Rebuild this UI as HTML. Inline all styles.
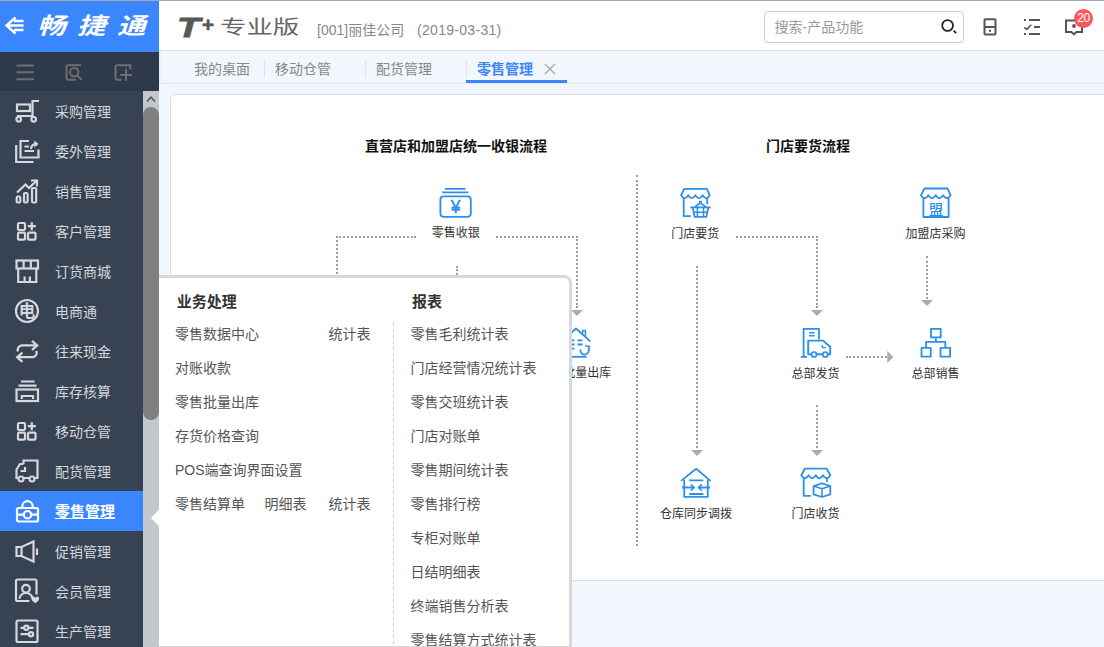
<!DOCTYPE html>
<html lang="zh-CN">
<head>
<meta charset="utf-8">
<title>T+ 专业版</title>
<style>
*{box-sizing:border-box;margin:0;padding:0}
html,body{width:1104px;height:647px;overflow:hidden;background:#f2f6fd;font-family:"Liberation Sans","Noto Sans CJK SC",sans-serif;font-size:14px;color:#555}
body{position:relative}
.abs{position:absolute}
/* top line */
#topline{left:0;top:0;width:1104px;height:1px;background:#a9a9a9;z-index:50}
/* logo */
#logo{left:0;top:0;width:159px;height:52px;background:#3a86ff;color:#fff}
#logo .back{position:absolute;left:0;top:12px}
#logo .name{position:absolute;left:37px;top:5px;font-size:23px;font-weight:700;font-style:italic;letter-spacing:9.3px;white-space:nowrap;line-height:42px;transform-origin:0 50%;transform:scaleX(1.24)}
/* header */
#header{left:159px;top:0;width:945px;height:51px;background:#fff;border-bottom:1px solid #dedfe2}
#header .tplus{position:absolute;left:17.5px;top:9.5px;font-size:27px;line-height:36px;font-weight:700;font-style:italic;color:#585858;font-family:"Liberation Sans",sans-serif;transform-origin:0 50%;transform:scaleX(1.4);-webkit-text-stroke:0.8px #585858}
#header .plus{position:absolute;left:42.5px;top:7px;font-size:21px;line-height:36px;font-weight:700;font-style:italic;color:#585858;font-family:"Liberation Sans",sans-serif;-webkit-text-stroke:0.5px #585858}
#header .ver{position:absolute;left:60.8px;top:9.5px;font-size:19px;line-height:36px;color:#666;white-space:nowrap;transform-origin:0 50%;transform:scaleX(1.39)}
#header .corp{position:absolute;left:158px;top:20px;font-size:14px;line-height:20px;color:#888;white-space:nowrap}
#header .date{position:absolute;left:258px;top:20px;font-size:14px;line-height:20px;color:#888;white-space:nowrap;letter-spacing:0.3px}
#search{left:764px;top:11px;width:200px;height:32px;border:1px solid #ccc;border-radius:4px;background:#fff}
#search span{position:absolute;left:9.6px;top:5px;font-size:14px;line-height:20px;color:#999}
#search svg{position:absolute;left:175px;top:6px}
/* icon bar */
#iconbar{left:0;top:52px;width:159px;height:39px;background:#2e394b}
/* sidebar */
#side{left:0;top:91px;width:143px;height:556px;background:#374252;overflow:hidden}
.mi{position:absolute;left:0;width:143px;height:40px;color:#d5d8dc;font-size:14px;line-height:40px}
.mi span{position:absolute;left:55px;top:1px;white-space:nowrap}
.mi svg{position:absolute;left:15px;top:8px;width:26px;height:26px;fill:none;stroke:currentColor;stroke-width:2.2;overflow:visible}
.mi.on{background:#3a86ff;color:#fff;font-weight:700;font-size:15px}
.mi.on span{text-decoration:underline}
#sbar{left:143px;top:91px;width:16px;height:556px;background:#c4c7cb}
#sbar .thumb{position:absolute;left:0;top:16px;width:16px;height:313px;border-radius:8px;background:#808080}
/* tabs */
#tabs{left:159px;top:51px;width:945px;height:33px;background:#f2f6fd;border-bottom:1px solid #e3e9f3;box-shadow:inset 3px 0 3px -2px rgba(0,0,0,.08)}
.tab{position:absolute;top:2px;height:32px;line-height:33px;font-size:14px;color:#888;white-space:nowrap}
.tab.on{color:#3a86ff;font-weight:700}
.tsep{position:absolute;top:9px;width:1px;height:18px;background:#dfe4ec}
#tabline{left:466px;top:80px;width:101px;height:3px;background:#3a86ff}
/* main panel */
#panel{left:170px;top:94px;width:940px;height:487px;background:#fff;border:1px solid #dadde1;border-radius:5px}
.ft{position:absolute;font-size:14px;font-weight:700;color:#111;white-space:nowrap;line-height:20px}
.fl{position:absolute;font-size:12px;color:#333;white-space:nowrap;line-height:16px;text-align:center}
/* popup */
#pop{left:159px;top:275px;width:413px;height:374px;background:#fff;border-top:3px solid #d8d8d8;border-right:3px solid #d8d8d8;border-bottom:3px solid #d8d8d8;border-top-right-radius:8px;z-index:20;overflow:hidden}
#pop .h{position:absolute;font-size:15px;font-weight:700;color:#333;line-height:20px;white-space:nowrap}
#pop .it{position:absolute;font-size:14px;color:#555;line-height:20px;white-space:nowrap}
#pop .vsep{position:absolute;left:234px;top:45px;width:1px;height:340px;background:repeating-linear-gradient(to bottom,#cdcdcd 0,#cdcdcd 3px,transparent 3px,transparent 6px)}
</style>
</head>
<body>
<div id="topline" class="abs"></div>

<!-- LOGO -->
<div id="logo" class="abs">
  <svg class="back" width="26" height="26" viewBox="0 0 26 26" fill="none" stroke="#fff" stroke-width="2.4"><path d="M15.5 5.5 L6.5 13.5 L15.5 21.5 M7 13.5 H23.5 M14 9 H23.5 M14 18 H23.5"/></svg>
  <div class="name">畅捷通</div>
</div>

<!-- HEADER -->
<div id="header" class="abs">
  <div class="tplus">T</div><div class="plus">+</div>
  <div class="ver">专业版</div>
  <div class="corp">[001]丽佳公司</div>
  <div class="date">(2019-03-31)</div>
</div>
<div id="search" class="abs"><span>搜索-产品功能</span>
  <svg width="18" height="18" viewBox="0 0 18 18" fill="none" stroke="#222" stroke-width="1.8"><circle cx="7.6" cy="7.5" r="5.4"/><path d="M13.6 12.6 L16.2 15.2"/></svg>
</div>
<!--HDRICONS-->
<svg class="abs" style="left:980px;top:15px" width="24" height="24" viewBox="0 0 24 24" fill="none" stroke="#555" stroke-width="2"><rect x="4.5" y="4.3" width="11" height="15.2" rx="0.8"/><path d="M4.5 12 H15.5"/><rect x="9" y="14.8" width="2" height="2" fill="#555" stroke="none"/></svg>
<svg class="abs" style="left:1020px;top:15px" width="24" height="24" viewBox="0 0 24 24" fill="none" stroke="#555" stroke-width="1.8"><path d="M9 5 H20 M14 12 H20 M9 19 H20"/><path d="M4 5 H6 M4 19 H6"/><path d="M4.3 12.3 L6.8 14.3 L11.2 9.8" stroke-width="1.6"/></svg>
<svg class="abs" style="left:1062px;top:15px" width="24" height="24" viewBox="0 0 24 24" fill="none" stroke="#555" stroke-width="2"><path d="M4 5.5 H20 V17 H14.5 L12 19.3 L9.5 17 H4 Z"/><circle cx="12" cy="11" r="1.9" fill="#555" stroke="none"/></svg>
<div class="abs" style="left:1074px;top:8.5px;width:19px;height:19px;border-radius:50%;background:#f9585f;color:#fff;font-size:12px;line-height:19px;text-align:center;letter-spacing:-0.5px">20</div>
<!--/HDRICONS-->

<!-- ICON BAR -->
<div id="iconbar" class="abs">
<!--BARICONS-->
<svg class="abs" style="left:0;top:0" width="159" height="39" viewBox="0 0 159 39" fill="none" stroke="#6e6e6e" stroke-width="2">
<path d="M16.5 13.5 H34 M16.5 20.3 H34 M16.5 27.2 H34"/>
<path d="M81 13.3 H68.2 a1.7 1.7 0 0 0 -1.7 1.7 V26 a1.7 1.7 0 0 0 1.7 1.7 H76"/><circle cx="74.2" cy="20.3" r="4.2"/><path d="M77.4 23.6 L81.7 27.8"/>
<path d="M130.3 17.5 V13.3 H117.2 a1.7 1.7 0 0 0 -1.7 1.7 V26 a1.7 1.7 0 0 0 1.7 1.7 H121.5"/><path d="M126 16.8 V28.8 M120 23 H132"/>
</svg>
<!--/BARICONS-->
</div>

<!-- SIDEBAR -->
<div id="side" class="abs">
<!--MENU-->
<div class="mi" style="top:0px"><svg viewBox="0 0 26 26"><path d="M24 2 H17.5 V17 H2"/><rect x="2" y="5.5" width="13" height="6.5"/><circle cx="3.7" cy="20.3" r="2.3"/><circle cx="18.7" cy="20.3" r="2.3"/></svg><span>采购管理</span></div>
<div class="mi" style="top:40px"><svg viewBox="0 0 26 26"><path d="M1.2 6 V23 H18.5"/><path d="M14 2 H5.5 V18.5 H23.5 V10.5"/><path d="M9.5 7.5 H14 M9.5 12 H19"/><path d="M16 10 C16.3 6.8 18.3 5 21 5" /><path d="M19.3 1.6 L23.6 5 L19.3 8.4 Z" fill="currentColor" stroke="none"/></svg><span>委外管理</span></div>
<div class="mi" style="top:80px"><svg viewBox="0 0 26 26"><rect x="1.7" y="17.5" width="3.6" height="6" rx="1.2"/><rect x="9" y="14" width="3.6" height="9.5" rx="1.2"/><rect x="17" y="9" width="4.2" height="14.5" rx="1.2"/><path d="M2 13.5 L10.5 5.5 L14 9 L21.5 1.7"/><path d="M16 1.5 H22 V7.5"/></svg><span>销售管理</span></div>
<div class="mi" style="top:120px"><svg viewBox="0 0 26 26"><rect x="3" y="4" width="7" height="7" rx="1"/><rect x="3" y="13.7" width="7" height="7" rx="1"/><rect x="13" y="13.7" width="7.5" height="7" rx="1"/><path d="M16.8 3.2 V11.2 M12.8 7.2 H20.8"/></svg><span>客户管理</span></div>
<div class="mi" style="top:160px"><svg viewBox="0 0 26 26"><rect x="1.5" y="1.5" width="21.5" height="8"/><path d="M8.6 1.5 V9.5 M15.8 1.5 V9.5"/><path d="M3.2 9.5 V23 H21.3 V9.5"/><path d="M9.6 23 V17.5 M14.9 23 V17.5"/></svg><span>订货商城</span></div>
<div class="mi" style="top:200px"><svg viewBox="0 0 26 26"><circle cx="12" cy="12" r="11"/><text x="12" y="17.8" font-size="16.5" font-weight="700" text-anchor="middle" fill="currentColor" stroke="none" font-family="Liberation Sans, Noto Sans CJK SC, sans-serif">电</text></svg><span>电商通</span></div>
<div class="mi" style="top:240px"><svg viewBox="0 0 26 26"><path d="M2.7 12.6 V10.8 a4.4 4.4 0 0 1 4.4 -4.4 H21" stroke-width="2.3"/><path d="M17 1.8 L22.2 6.4 L17 11" stroke-width="2.3"/><path d="M21.6 12 V13.8 a4.4 4.4 0 0 1 -4.4 4.4 H3.4" stroke-width="2.3"/><path d="M7.4 13.6 L2.2 18.2 L7.4 22.8" stroke-width="2.3"/></svg><span>往来现金</span></div>
<div class="mi" style="top:280px"><svg viewBox="0 0 26 26"><path d="M6 2.5 H19.5 M3.5 6.7 H21.5"/><rect x="1.5" y="10.5" width="21.5" height="11.5"/><path d="M6.8 20 V17 H18 V20"/></svg><span>库存核算</span></div>
<div class="mi" style="top:320px"><svg viewBox="0 0 26 26"><rect x="3" y="4" width="7" height="7" rx="1"/><rect x="3" y="13.7" width="7" height="7" rx="1"/><rect x="13" y="13.7" width="7.5" height="7" rx="1"/><path d="M16.8 3.2 V11.2 M12.8 7.2 H20.8"/></svg><span>移动仓管</span></div>
<div class="mi" style="top:360px"><svg viewBox="0 0 26 26"><path d="M8.5 5 V1.5 H22.5 V19 H19.7 M14.3 19 H8.7 M3.3 19 H1.5 V10.5 L5 5 H8.5"/><circle cx="6" cy="20" r="2.5"/><circle cx="17" cy="20" r="2.5"/><path d="M5.5 12 H10 V8"/></svg><span>配货管理</span></div>
<div class="mi on" style="top:400px"><svg viewBox="0 0 26 26"><rect x="2" y="9" width="21" height="13.5" rx="1.5"/><path d="M7.3 9 V7.4 a5.2 5.2 0 0 1 10.4 0 V9"/><circle cx="12.5" cy="15.7" r="3.7"/><path d="M2 15.7 H8.8 M16.2 15.7 H23"/></svg><span>零售管理</span></div>
<div class="mi" style="top:440px"><svg viewBox="0 0 26 26"><path d="M1.5 8 H6.5 L18.5 2.5 V22.5 L6.5 17 H1.5 Z"/><path d="M6.5 8 V17"/><path d="M22 9.5 V16"/></svg><span>促销管理</span></div>
<div class="mi" style="top:480px"><svg viewBox="0 0 26 26"><path d="M14.5 22 H2.5 a1.5 1.5 0 0 1 -1.5 -1.5 V2 a1.5 1.5 0 0 1 1.5 -1.5 H20 a1.5 1.5 0 0 1 1.5 1.5 V15.5"/><circle cx="11" cy="9.7" r="3.8"/><path d="M4.5 19.8 a6.5 5.8 0 0 1 13 0"/><path d="M20.3 24.3 C17.8 22.5 16.5 21.3 16.5 19.8 a1.9 1.9 0 0 1 3.8 -0.6 a1.9 1.9 0 0 1 3.8 0.6 C24.1 21.3 22.8 22.5 20.3 24.3 Z" fill="currentColor" stroke="none"/></svg><span>会员管理</span></div>
<div class="mi" style="top:520px"><svg viewBox="0 0 26 26"><rect x="1.5" y="1.5" width="21" height="21.5" rx="1.5"/><path d="M5.5 8.8 H18.5 M5.5 15.2 H18.5"/><circle cx="11.3" cy="8.8" r="2.1" fill="#374252"/><circle cx="16" cy="15.2" r="2.1" fill="#374252"/></svg><span>生产管理</span></div>
<!--/MENU-->
</div>
<div id="sbar" class="abs">
  <svg class="abs" style="left:3px;top:4px" width="10" height="8" viewBox="0 0 10 8" fill="none" stroke="#5a5a5a" stroke-width="1.8"><path d="M1 6.5 L5 2.2 L9 6.5"/></svg>
  <div class="thumb"></div>
</div>

<!-- TABS -->
<div id="tabs" class="abs">
  <div class="tab" style="left:35px">我的桌面</div>
  <div class="tsep" style="left:105px"></div>
  <div class="tab" style="left:116px">移动仓管</div>
  <div class="tsep" style="left:206px"></div>
  <div class="tab" style="left:217px">配货管理</div>
  <div class="tsep" style="left:307px"></div>
  <div class="tab on" style="left:318px">零售管理</div>
  <svg class="abs" style="left:385px;top:12px" width="12" height="12" viewBox="0 0 12 12" stroke="#aaa" stroke-width="1.4"><path d="M1 1 L11 11 M11 1 L1 11"/></svg>
</div>
<div id="tabline" class="abs"></div>

<!-- PANEL -->
<div id="panel" class="abs"></div>
<!--FLOW-->
<div class="abs dl" style="left:336px;top:236px;width:80px;height:190px;border-top:2px dotted #9e9e9e;border-left:2px dotted #9e9e9e;"></div>
<div class="abs dl" style="left:496px;top:236px;width:82px;height:72px;border-top:2px dotted #9e9e9e;border-right:2px dotted #9e9e9e;"></div>
<div class="abs dl" style="left:456px;top:266px;width:2px;height:160px;border-left:2px dotted #9e9e9e;"></div>
<div class="abs dl" style="left:636px;top:175px;width:2px;height:371px;border-left:2px dotted #9e9e9e;"></div>
<div class="abs dl" style="left:736px;top:236px;width:82px;height:72px;border-top:2px dotted #9e9e9e;border-right:2px dotted #9e9e9e;"></div>
<div class="abs dl" style="left:696px;top:266px;width:2px;height:182px;border-left:2px dotted #9e9e9e;"></div>
<div class="abs dl" style="left:926px;top:256px;width:2px;height:43px;border-left:2px dotted #9e9e9e;"></div>
<div class="abs dl" style="left:846px;top:356px;width:41px;height:2px;border-top:2px dotted #9e9e9e;"></div>
<div class="abs dl" style="left:816px;top:405px;width:2px;height:43px;border-left:2px dotted #9e9e9e;"></div>
<svg class="abs" style="left:0;top:0;z-index:5" width="1104" height="647" viewBox="0 0 1104 647" fill="none">
<path d="M571 310 H583 L577 316 Z" fill="#ababab"/>
<path d="M811 310 H823 L817 316 Z" fill="#ababab"/>
<path d="M921 300 H933 L927 306 Z" fill="#ababab"/>
<path d="M691 450 H703 L697 456 Z" fill="#ababab"/>
<path d="M811 450 H823 L817 456 Z" fill="#ababab"/>
<path d="M887.3 351 V363 L893.3 357 Z" fill="#ababab"/>
<g stroke="#2c8fe8" stroke-width="1.8" stroke-linejoin="round">
<path d="M445 188.8 H465.5 M442.3 192.3 H468.2" stroke-width="1.7"/>
<rect x="440.4" y="196.4" width="30.4" height="20.4" rx="3.2"/>
<text x="455.7" y="212.9" font-size="17.5" font-weight="400" stroke-width="0.5" paint-order="stroke" text-anchor="middle" fill="#2c8fe8" stroke="#2c8fe8" font-family="Liberation Sans, sans-serif">¥</text>
<path d="M561.5 341.4 L576 328.5 L590.3 341.4" /><path d="M582.6 334 V330.5 H585.4 V337" stroke-width="1.5"/><path d="M564 356.8 H586.6"/><path d="M577.5 340.3 H582.5 M577.5 344.5 H582.5 M569.5 340.3 H574.5 M569.5 344.5 H574.5 M569.5 348.7 H574.5" stroke-width="1.8"/><path d="M580.5 349.5 a4.2 4.2 0 1 0 7.6 -1.5" stroke-width="1.7"/><path d="M585 346 L589.5 346.3 L588.6 350.8" stroke-width="1.5"/>
<path d="M684.3 188.8 H706.9 L709.7 195.2 Q706.12 201.09 702.55 195.2 Q698.98 201.09 695.40 195.2 Q691.83 201.09 688.25 195.2 Q684.68 201.09 681.10 195.2 Z"/>
<path d="M683.7 198 V216.1 H690.7 M707.2 198 V204.3"/>
<path d="M690.3 207.4 H710.6" stroke-width="1.8"/><path d="M692.6 207.4 L694.6 216.9 H706.3 L708.4 207.4" stroke-width="1.8"/><path d="M697.4 207.4 V216.9 M703.5 207.4 V216.9 M693.6 212.3 H707.3" stroke-width="1.5"/><path d="M695 207 L700.4 202.8 L706 207" stroke-width="1.6"/><circle cx="700.4" cy="202.2" r="1.1" stroke-width="1.3" fill="#fff"/>
<path d="M924.4 188.5 H947.6 L950.6 195.3 Q946.89 201.19 943.17 195.3 Q939.46 201.19 935.75 195.3 Q932.04 201.19 928.33 195.3 Q924.61 201.19 920.90 195.3 Z"/>
<path d="M923.4 198 V217 H948.6 V198"/>
<text x="936" y="214.6" font-size="14.5" font-weight="500" text-anchor="middle" fill="#2c8fe8" stroke="none" font-family="Liberation Sans, Noto Sans CJK SC, sans-serif">盟</text>
<path d="M800.8 356.8 H807 M803.6 356.8 V328.8 H819 V339.5" /><path d="M809 332.7 H814.6 M809 335.7 H814.6" stroke-width="1.5"/>
<path d="M811.3 354.3 H808.2 V340.6 H823 L830.2 346.8 V354.3 H828 M816.8 354.3 H822.5" stroke-width="1.9"/><circle cx="814" cy="354.5" r="2.5" stroke-width="1.7"/><circle cx="825.3" cy="354.5" r="2.5" stroke-width="1.7"/><path d="M822.3 345 V347.6 H826" stroke-width="1.4"/>
<rect x="931" y="328.8" width="9.7" height="8.6"/><rect x="921.5" y="347.8" width="9.2" height="8.9"/><rect x="940.5" y="347.8" width="9.6" height="8.9"/><path d="M935.8 337.4 V341.8 M926 347.8 V341.8 H945.3 V347.8"/>
<path d="M681 480.9 L696.2 468.7 L710.6 480.9"/><path d="M684.2 479.5 V496.8 H707.8 V479.5"/><path d="M689.2 480.3 H703.4 M689.2 494 H703.4" stroke-width="1.8"/><path d="M682 487.5 H694 M710 487.5 H698.5" stroke-width="1.8"/><path d="M690.8 484.3 L694.3 487.5 L690.8 490.7 M701.8 484.3 L698.3 487.5 L701.8 490.7" stroke-width="1.6"/>
<path d="M804.9 468.7 H826.7 L830.3 475.2 Q826.67 481.28 823.05 475.2 Q819.42 481.28 815.80 475.2 Q812.17 481.28 808.55 475.2 Q804.92 481.28 801.30 475.2 Z"/>
<path d="M803.7 478 V495.9 H810.8 M827 478 V482"/>
<path d="M813.6 486 L822 483.3 L830.3 486 V494.3 L822 497 L813.6 494.3 Z" stroke-width="1.8"/><path d="M813.6 486 L822 488.7 L830.3 486 M822 488.7 V497" stroke-width="1.5"/>
</g>
</svg>
<div class="ft" style="left:365px;top:136px">直营店和加盟店统一收银流程</div>
<div class="ft" style="left:766px;top:136px">门店要货流程</div>
<div class="fl" style="left:421.7px;top:225.3px;width:68px">零售收银</div>
<div class="fl" style="left:529.2px;top:365.1px;width:92px">零售批量出库</div>
<div class="fl" style="left:661.3px;top:225.6px;width:68px">门店要货</div>
<div class="fl" style="left:895.6px;top:225.6px;width:80px">加盟店采购</div>
<div class="fl" style="left:781.5px;top:365.6px;width:68px">总部发货</div>
<div class="fl" style="left:901.5px;top:365.6px;width:68px">总部销售</div>
<div class="fl" style="left:650.0px;top:505.6px;width:92px">仓库同步调拨</div>
<div class="fl" style="left:781.5px;top:505.6px;width:68px">门店收货</div>
<!--/FLOW-->

<!-- POPUP -->
<div id="pop" class="abs">
<!--POP-->
<div class="h" style="left:17.7px;top:14.0px">业务处理</div>
<div class="h" style="left:253.0px;top:14.0px">报表</div>
<div class="it" style="left:16.0px;top:46.0px">零售数据中心</div>
<div class="it" style="left:16.0px;top:80.0px">对账收款</div>
<div class="it" style="left:16.0px;top:114.0px">零售批量出库</div>
<div class="it" style="left:16.0px;top:148.0px">存货价格查询</div>
<div class="it" style="left:16.0px;top:182.0px">POS端查询界面设置</div>
<div class="it" style="left:16.0px;top:216.0px">零售结算单</div>
<div class="it" style="left:169.6px;top:46.0px">统计表</div>
<div class="it" style="left:105.6px;top:216.0px">明细表</div>
<div class="it" style="left:169.6px;top:216.0px">统计表</div>
<div class="it" style="left:251.4px;top:46.0px">零售毛利统计表</div>
<div class="it" style="left:251.4px;top:80.0px">门店经营情况统计表</div>
<div class="it" style="left:251.4px;top:114.0px">零售交班统计表</div>
<div class="it" style="left:251.4px;top:148.0px">门店对账单</div>
<div class="it" style="left:251.4px;top:182.0px">零售期间统计表</div>
<div class="it" style="left:251.4px;top:216.0px">零售排行榜</div>
<div class="it" style="left:251.4px;top:250.0px">专柜对账单</div>
<div class="it" style="left:251.4px;top:284.0px">日结明细表</div>
<div class="it" style="left:251.4px;top:318.0px">终端销售分析表</div>
<div class="it" style="left:251.4px;top:352.0px">零售结算方式统计表</div>
<div class="vsep"></div>
<!--/POP-->
</div>
<!--POPARROW-->
<svg class="abs" style="left:150px;top:508px;z-index:21" width="10" height="20" viewBox="0 0 10 20"><path d="M9.2 1.5 L1 10 L9.2 18.5 Z" fill="#fff"/></svg>
<!--/POPARROW-->
</body>
</html>
